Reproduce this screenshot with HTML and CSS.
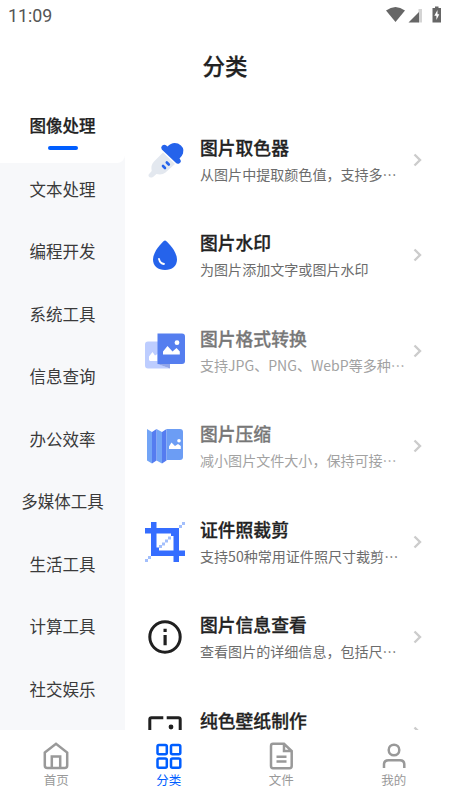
FILE: index.html
```html
<!DOCTYPE html>
<html lang="zh-CN">
<head>
<meta charset="utf-8">
<title>分类</title>
<link rel="stylesheet" href="styles.css">
</head>
<body>
<div class="app">
  <div class="status">
    <span class="time">11:09</span>
    <svg class="status-icons" width="58" height="20" viewBox="0 0 58 20">
      <path d="M0 4.500Q9.500-2.500 19 4.500L9.500 16Z" fill="#666"/>
      <path d="M32.500 3H36V16.500H32.500Z" fill="#d4d4d4"/>
      <path d="M22.500 16.500L33 6V16.500Z" fill="#666"/>
      <path d="M49 2V.5H52.500V2H55V16.500H46.500V2Z" fill="#666"/>
      <path d="M51.500 4L48.300 9.800H50.400V14L53.300 8.300H51.500Z" fill="#fff"/>
    </svg>
  </div>
  <header class="header">分类</header>
  <main class="main">
    <nav class="sidebar">
      <div class="cat active">图像处理</div>
      <div class="cat">文本处理</div>
      <div class="cat">编程开发</div>
      <div class="cat">系统工具</div>
      <div class="cat">信息查询</div>
      <div class="cat">办公效率</div>
      <div class="cat">多媒体工具</div>
      <div class="cat">生活工具</div>
      <div class="cat">计算工具</div>
      <div class="cat">社交娱乐</div>
    </nav>
    <section class="list">
      <div class="item">
        <svg class="icon" viewBox="0 0 40 40">
          <path d="M18 12.500L30 24L20.500 32.500Q17 35.300 11.500 34L8 37Q5 38.500 3.500 36Q3 34.500 5 33L6.700 31Q5.500 25 9 21.500Z" fill="#e3e8ef"/>
          <path d="M17 5.700Q20 3.500 22.500 6.500Q27 1.500 33 3.500Q40 7 38 13.500Q37.200 15.800 34.500 18.500Q37.300 21.500 34.500 23.300Q32.500 24.700 30.500 22.500L16.800 9.500Q15.500 7.500 17 5.700Z" fill="#2563eb"/>
          <path d="M18 26L20 28M21.800 22.500L23.800 24.500" stroke="#2563eb" stroke-width="2.600" stroke-linecap="round"/>
        </svg>
        <div class="text"><div class="name">图片取色器</div><div class="desc">从图片中提取颜色值，支持多…</div></div>
        <svg class="arrow" viewBox="0 0 10 14"><path d="M1.500 1.500L7 7L1.500 12.500"/></svg>
      </div>
      <div class="item">
        <svg class="icon" viewBox="0 0 40 40">
          <path d="M20 5.500C21.500 5.500 32 16 32 24.500C32 31 27 35 20 35S8 31 8 24.500C8 16 18.500 5.500 20 5.500Z" fill="#2563eb"/>
          <path d="M14 24Q15 28.500 19 29" fill="none" stroke="#fff" stroke-width="1.800" stroke-linecap="round"/>
        </svg>
        <div class="text"><div class="name">图片水印</div><div class="desc">为图片添加文字或图片水印</div></div>
        <svg class="arrow" viewBox="0 0 10 14"><path d="M1.500 1.500L7 7L1.500 12.500"/></svg>
      </div>
      <div class="item dim">
        <svg class="icon" viewBox="0 0 40 40">
          <path d="M3 10.500H13V33L25 37.500H3Q0 37.500 0 34.500V13.500Q0 10.500 3 10.500Z" fill="#bdcdff"/>
          <path d="M12.500 33H25V37.500Z" fill="#91a5e8"/>
          <path d="M4 29V25.500L7.500 21L10 24.500L12.500 23V30H5Z" fill="#fff"/>
          <path d="M12.500 2.500H37Q40 2.500 40 5.500V30Q40 33 37 33H12.500Z" fill="#557eef"/>
          <path d="M18 23.500V20.500L22.500 15L27.500 20.500L31.500 17L34.800 20.500V23.500Z" fill="#fff"/><circle cx="32" cy="11.700" r="2.400" fill="#fff"/>
        </svg>
        <div class="text"><div class="name">图片格式转换</div><div class="desc">支持JPG、PNG、WebP等多种…</div></div>
        <svg class="arrow" viewBox="0 0 10 14"><path d="M1.500 1.500L7 7L1.500 12.500"/></svg>
      </div>
      <div class="item dim">
        <svg class="icon" viewBox="0 0 40 40">
          <path d="M2 3L7 6V37.500L2 34.500ZM11.500 3L17 6V37.500L11.500 34.500Z" fill="#72a4f6"/>
          <path d="M7 6L11.500 3V34.500L7 37.500ZM17 6L21.500 3V34.500L17 37.500Z" fill="#557cf0"/>
          <path d="M21.500 3H35Q38 3 38 6V31Q38 34 35 34H21.500Z" fill="#6c9df4"/>
          <path d="M24 23V20.500L26.500 16.500L30 20L33 18L35.800 20V23Z" fill="#fff"/><circle cx="34" cy="14.800" r="1.800" fill="#fff"/>
        </svg>
        <div class="text"><div class="name">图片压缩</div><div class="desc">减小图片文件大小，保持可接…</div></div>
        <svg class="arrow" viewBox="0 0 10 14"><path d="M1.500 1.500L7 7L1.500 12.500"/></svg>
      </div>
      <div class="item">
        <svg class="icon" viewBox="0 0 40 40">
          <g fill="#a3bffc"><path d="M0 37h3v3H0zM3 34h3v3H3zM14 23h3v3H14zM17 20.500h3v3H17zM20 17.500h3v3H20zM23 14.500h3v3H23zM34 3h3v3H34zM37 0h3v3H37z"/></g>
          <path d="M6 0H11.500V6H34V28.500H40V34H34V40H28.500V34H6V11.500H0V6H6ZM11.500 11.500V25.500H14V28.500H28.500V14H26V11.500Z" fill="#356dff" fill-rule="evenodd"/>
        </svg>
        <div class="text"><div class="name">证件照裁剪</div><div class="desc">支持50种常用证件照尺寸裁剪…</div></div>
        <svg class="arrow" viewBox="0 0 10 14"><path d="M1.500 1.500L7 7L1.500 12.500"/></svg>
      </div>
      <div class="item">
        <svg class="icon" viewBox="0 0 40 40">
          <circle cx="20" cy="20" r="15.200" fill="none" stroke="#202020" stroke-width="3"/>
          <path d="M18.500 11.700h3.200v3.200h-3.200zM18.500 18h3.200v10.300h-3.200z" fill="#202020"/>
        </svg>
        <div class="text"><div class="name">图片信息查看</div><div class="desc">查看图片的详细信息，包括尺…</div></div>
        <svg class="arrow" viewBox="0 0 10 14"><path d="M1.500 1.500L7 7L1.500 12.500"/></svg>
      </div>
      <div class="item">
        <svg class="icon" viewBox="0 0 40 40">
          <path d="M18.300 4.700H6.500Q4.800 4.700 4.800 6.500V33M21.700 4.700H33.500Q35.200 4.700 35.200 6.500V33" fill="none" stroke="#202020" stroke-width="3"/>
          <circle cx="26" cy="14" r="2.400" fill="#202020"/>
        </svg>
        <div class="text"><div class="name">纯色壁纸制作</div><div class="desc"></div></div>
        <svg class="arrow" viewBox="0 0 10 14"><path d="M1.500 1.500L7 7L1.500 12.500"/></svg>
      </div>
    </section>
  </main>
  <footer class="tabs">
    <div class="tab">
      <svg viewBox="0 0 28 28"><path d="M2.800 10.500L14 1.800L25.200 10.500V23.500Q25.200 26 22.700 26H5.300Q2.800 26 2.800 23.500ZM9.800 26V14.500H18.200V26"/></svg>
      <span>首页</span>
    </div>
    <div class="tab on">
      <svg viewBox="0 0 28 28"><rect x="2.500" y="3" width="9.300" height="9.300" rx="1.500"/><rect x="16" y="3" width="9.300" height="9.300" rx="1.500"/><rect x="2.500" y="16.500" width="9.300" height="9.300" rx="1.500"/><rect x="16" y="16.500" width="9.300" height="9.300" rx="1.500"/></svg>
      <span>分类</span>
    </div>
    <div class="tab">
      <svg viewBox="0 0 28 28"><path d="M17 1.800H6Q4 1.800 4 4V24Q4 26.200 6 26.200H22.500Q24.700 26.200 24.700 24V9ZM17 2V9H24M9.500 14.700H19.500M9.500 19.500H19.500"/></svg>
      <span>文件</span>
    </div>
    <div class="tab">
      <svg viewBox="0 0 28 28"><circle cx="14" cy="8" r="5.300"/><path d="M4 26V22.500Q4 18.200 8.500 18.200H20Q24.300 18.200 24.300 22.500V26"/></svg>
      <span>我的</span>
    </div>
  </footer>
</div>
</body>
</html>
```
FILE: styles.css
```css
* { box-sizing: border-box; }
body {
  margin: 0;
  background: #fff;
  font-family: "Noto Sans CJK SC", sans-serif;
  color: #222;
}
.app {
  display: flex;
  flex-direction: column;
  height: 800px;
  overflow: hidden;
}
.status {
  flex: none;
  display: flex;
  justify-content: space-between;
  height: 32px;
  padding: 6px 6px 0 8px;
}
.time {
  font: 400 17.8px/20px Roboto, sans-serif;
  color: #555;
}
.status-icons { flex: none; }
.header {
  flex: none;
  height: 68px;
  font-size: 22.5px;
  font-weight: 500;
  line-height: 66px;
  text-align: center;
  -webkit-text-stroke: 0.25px;
}
.main {
  flex: 1;
  display: flex;
  min-height: 0;
  overflow: hidden;
}
.sidebar {
  flex: none;
  width: 125px;
  background: #f7f8fa;
}
.cat {
  height: 62.5px;
  font-size: 16.5px;
  line-height: 52.5px;
  text-align: center;
  color: #3a3a3a;
}
.cat.active {
  display: flex;
  flex-direction: column;
  align-items: center;
  line-height: 50px;
  background: #fff;
  border-bottom-right-radius: 8px;
  font-weight: 500;
  color: #222;
  -webkit-text-stroke: 0.25px;
}
.cat.active::after {
  content: "";
  width: 30px;
  height: 4px;
  margin-top: -4px;
  border-radius: 2px;
  background: #005eff;
}
.list {
  flex: 1;
  min-width: 0;
  padding-top: 12px;
}
.item {
  display: flex;
  align-items: center;
  height: 95.5px;
  padding: 0 27px 0 20px;
}
.icon {
  flex: none;
  width: 40px;
  height: 40px;
}
.text {
  flex: 1;
  min-width: 0;
  margin-left: 15px;
  padding-bottom: 2px;
  white-space: nowrap;
}
.name {
  font-size: 17.8px;
  font-weight: 500;
  line-height: 26px;
  -webkit-text-stroke: 0.3px;
}
.desc {
  min-height: 20px;
  margin-top: 4px;
  font-size: 14.05px;
  line-height: 20px;
  color: #6c6c6c;
}
.dim .name { color: #777; }
.dim .desc { color: #a2a2a2; }
.arrow {
  flex: none;
  width: 10px;
  height: 14px;
  fill: none;
  stroke: #ccc;
  stroke-width: 2.4;
}
.tabs {
  flex: none;
  display: flex;
  height: 70px;
  background: #fff;
}
.tab {
  flex: 1;
  display: flex;
  flex-direction: column;
  align-items: center;
  padding-top: 12px;
  font-size: 12.5px;
  line-height: 20px;
  color: #999;
}
.tab svg {
  width: 28px;
  height: 28px;
  fill: none;
  stroke: currentColor;
  stroke-width: 2.5;
}
.tab.on { color: #005eff; }
```
